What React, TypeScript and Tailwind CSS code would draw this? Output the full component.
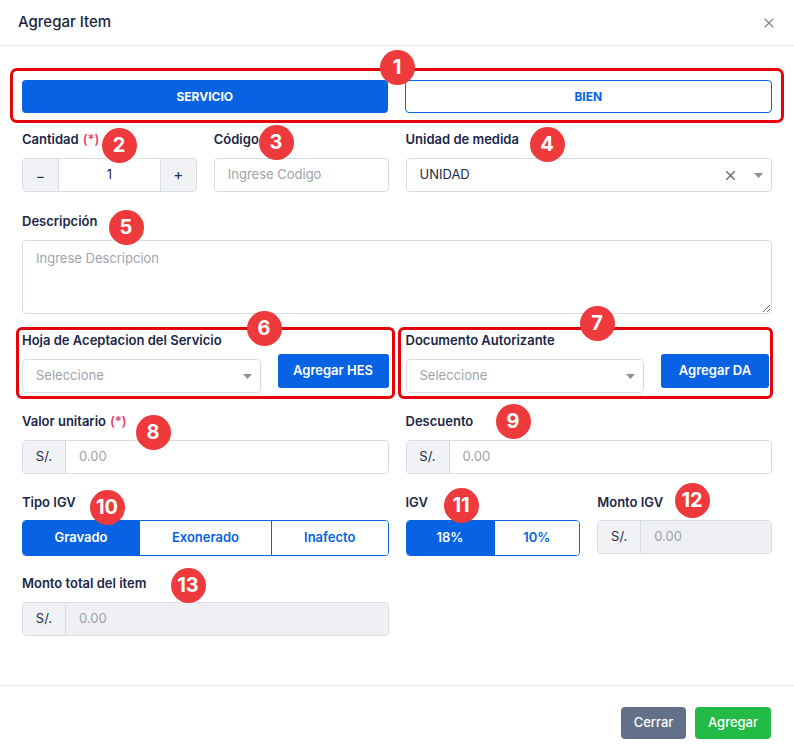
import { X } from 'lucide-react'

const FONT = { fontFamily: 'Inter, "Noto Sans", sans-serif' }

function Badge({ n, x, y }: { n: number; x: number; y: number }) {
  return (
    <span
      className="absolute grid size-[35px] place-items-center rounded-full bg-[#ee3a3c] text-[20px] font-bold leading-none text-white"
      style={{ left: x - 17.5, top: y - 17.5 }}
    >
      {n}
    </span>
  )
}

function Label({ children, required }: { children: React.ReactNode; required?: boolean }) {
  return (
    <p className="h-[18px] text-[13px] font-semibold leading-[18px] text-[#1b2748]">
      {children}
      {required && <span className="ml-1 text-[#e8436b]">(*)</span>}
    </p>
  )
}

function Caret() {
  return (
    <svg width="9" height="5" viewBox="0 0 9 5" className="shrink-0">
      <path d="M0 0h9L4.5 5z" fill="#8a8f98" />
    </svg>
  )
}

function SelectBox({ value, placeholder, clearable }: { value?: string; placeholder?: string; clearable?: boolean }) {
  return (
    <div className="flex h-[34px] flex-1 items-center rounded-[4px] border border-[#d8dde4] bg-white pl-[13px] pr-[8px]">
      <span className={value ? 'flex-1 text-[13px] text-[#1e2b4a]' : 'flex-1 text-[13px] text-[#9ea3ab]'}>
        {value ?? placeholder}
      </span>
      {clearable && <X size={15} strokeWidth={2.8} className="mr-[16px] text-[#6f7c8e]" />}
      <Caret />
    </div>
  )
}

function MoneyInput({ disabled }: { disabled?: boolean }) {
  return (
    <div className="flex h-[34px] overflow-hidden rounded-[4px] border border-[#d8dde4]">
      <span className="grid w-[43px] place-items-center border-r border-[#d8dde4] bg-[#f0f2f5] text-[13px] text-[#1e2b4a]">
        S/.
      </span>
      <span
        className={
          disabled
            ? 'flex flex-1 items-center bg-[#eef0f4] pl-[13px] text-[13px] text-[#9ea3ab]'
            : 'flex flex-1 items-center bg-white pl-[13px] text-[13px] text-[#9ea3ab]'
        }
      >
        0.00
      </span>
    </div>
  )
}

function Segmented({ items, active }: { items: { label: string; w: string }[]; active: number }) {
  return (
    <div className="flex h-[36px] overflow-hidden rounded-[4px] border border-[#0a63e0]">
      {items.map((it, i) => (
        <span
          key={it.label}
          className={
            (i === active ? 'bg-[#0763e3] text-white' : 'bg-white text-[#0763e3]') +
            (i > 0 ? ' border-l border-[#0a63e0]' : '') +
            ' grid place-items-center text-[13px] font-semibold ' +
            it.w
          }
        >
          {it.label}
        </span>
      ))}
    </div>
  )
}

export default function App() {
  return (
    <div className="relative flex h-[751px] w-[794px] flex-col bg-white" style={FONT}>
      <header className="flex h-[46px] shrink-0 items-center justify-between border-b border-[#e6e8ec] pl-[18px] pr-[17px]">
        <h1 className="text-[15px] font-medium text-[#1a2440]">Agregar Item</h1>
        <X size={16} strokeWidth={1.6} className="text-[#7d828b]" />
      </header>

      <div className="flex-1 px-[22px] pt-[22px]">
        {/* Tipo de item */}
        <div className="-mx-[12px] flex gap-[17px] rounded-[7px] border-[3px] border-[#e4050b] px-[9px] pb-[7px] pt-[9px]">
          <span className="grid h-[33px] flex-1 place-items-center rounded-[4px] bg-[#0763e3] text-[12px] font-bold text-white">
            SERVICIO
          </span>
          <span className="grid h-[33px] flex-1 place-items-center rounded-[4px] border border-[#0a63e0] bg-white text-[12px] font-bold text-[#0763e3]">
            BIEN
          </span>
        </div>

        <div className="mt-[7px] grid grid-cols-2 gap-x-[17px]">
          <div className="grid grid-cols-2 gap-x-[17px]">
            <div>
              <Label required>Cantidad</Label>
              <div className="mt-[10px] flex h-[34px] overflow-hidden rounded-[4px] border border-[#d8dde4]">
                <span className="grid w-[36px] place-items-center border-r border-[#d8dde4] bg-[#f0f2f5] text-[14px] text-[#1e2b4a]">
                  −
                </span>
                <span className="grid flex-1 place-items-center text-[13px] text-[#1e2b4a]">1</span>
                <span className="grid w-[36px] place-items-center border-l border-[#d8dde4] bg-[#f0f2f5] text-[15px] text-[#1e2b4a]">
                  +
                </span>
              </div>
            </div>
            <div>
              <Label>Código</Label>
              <div className="mt-[10px] flex h-[34px] items-center rounded-[4px] border border-[#d8dde4] pl-[13px] text-[13px] text-[#9ea3ab]">
                Ingrese Codigo
              </div>
            </div>
          </div>
          <div>
            <Label>Unidad de medida</Label>
            <div className="mt-[10px] flex">
              <SelectBox value="UNIDAD" clearable />
            </div>
          </div>
        </div>

        <div className="mt-[20px]">
          <Label>Descripción</Label>
          <textarea
            className="mt-[10px] block h-[74px] w-full resize-y rounded-[4px] border border-[#d8dde4] px-[13px] py-[8px] text-[13px] text-[#1e2b4a] outline-none placeholder:text-[#9ea3ab]"
            placeholder="Ingrese Descripcion"
          />
        </div>

        <div className="mt-[13px] grid grid-cols-2 gap-x-[17px]">
          <div className="-mx-[6px] h-[72px] rounded-[6px] border-[3px] border-[#e4050b] px-[3px] pt-[1px]">
            <Label>Hoja de Aceptacion del Servicio</Label>
            <div className="mt-[10px] flex items-start gap-[17px]">
              <SelectBox placeholder="Seleccione" />
              <span className="-mt-[5px] grid h-[34px] w-[111px] place-items-center rounded-[3px] bg-[#0763e3] text-[13px] font-semibold text-white">
                Agregar HES
              </span>
            </div>
          </div>
          <div className="-ml-[8px] -mr-[1px] h-[72px] rounded-[6px] border-[3px] border-[#e4050b] pl-[5px] pr-[1px] pt-[1px]">
            <Label>Documento Autorizante</Label>
            <div className="mt-[10px] flex items-start gap-[17px]">
              <SelectBox placeholder="Seleccione" />
              <span className="-mt-[5px] grid h-[34px] w-[108px] place-items-center rounded-[3px] bg-[#0763e3] text-[13px] font-semibold text-white">
                Agregar DA
              </span>
            </div>
          </div>
        </div>

        <div className="mt-[13px] grid grid-cols-2 gap-x-[17px]">
          <div>
            <Label required>Valor unitario</Label>
            <div className="mt-[10px]">
              <MoneyInput />
            </div>
          </div>
          <div>
            <Label>Descuento</Label>
            <div className="mt-[10px]">
              <MoneyInput />
            </div>
          </div>
        </div>

        <div className="mt-[19px] grid grid-cols-2 gap-x-[17px]">
          <div>
            <Label>Tipo IGV</Label>
            <div className="mt-[9px]">
              <Segmented
                active={0}
                items={[
                  { label: 'Gravado', w: 'w-[116px]' },
                  { label: 'Exonerado', w: 'w-[132px]' },
                  { label: 'Inafecto', w: 'flex-1' },
                ]}
              />
            </div>
          </div>
          <div className="grid grid-cols-2 gap-x-[17px]">
            <div>
              <Label>IGV</Label>
              <div className="mt-[9px]">
                <Segmented
                  active={0}
                  items={[
                    { label: '18%', w: 'w-[87px]' },
                    { label: '10%', w: 'flex-1' },
                  ]}
                />
              </div>
            </div>
            <div>
              <Label>Monto IGV</Label>
              <div className="mt-[9px]">
                <MoneyInput disabled />
              </div>
            </div>
          </div>
        </div>

        <div className="mt-[18px] grid grid-cols-2 gap-x-[17px]">
          <div>
            <Label>Monto total del item</Label>
            <div className="mt-[10px]">
              <MoneyInput disabled />
            </div>
          </div>
        </div>
      </div>

      <footer className="flex h-[66px] shrink-0 justify-end gap-[9px] border-t border-[#e6e8ec] pr-[23px] pt-[21px]">
        <span className="grid h-[32px] w-[65px] place-items-center rounded-[4px] bg-[#637089] text-[13px] font-medium text-white">
          Cerrar
        </span>
        <span className="grid h-[32px] w-[76px] place-items-center rounded-[4px] bg-[#22bb46] text-[13px] font-medium text-white">
          Agregar
        </span>
      </footer>

      <Badge n={1} x={397} y={67} />
      <Badge n={2} x={119} y={145} />
      <Badge n={3} x={276} y={142} />
      <Badge n={4} x={547} y={144} />
      <Badge n={5} x={126} y={227} />
      <Badge n={6} x={264} y={328} />
      <Badge n={7} x={597} y={323} />
      <Badge n={8} x={153} y={432} />
      <Badge n={9} x={513} y={421} />
      <Badge n={10} x={107} y={507} />
      <Badge n={11} x={461} y={505} />
      <Badge n={12} x={692} y={500} />
      <Badge n={13} x={188} y={585} />
    </div>
  )
}
